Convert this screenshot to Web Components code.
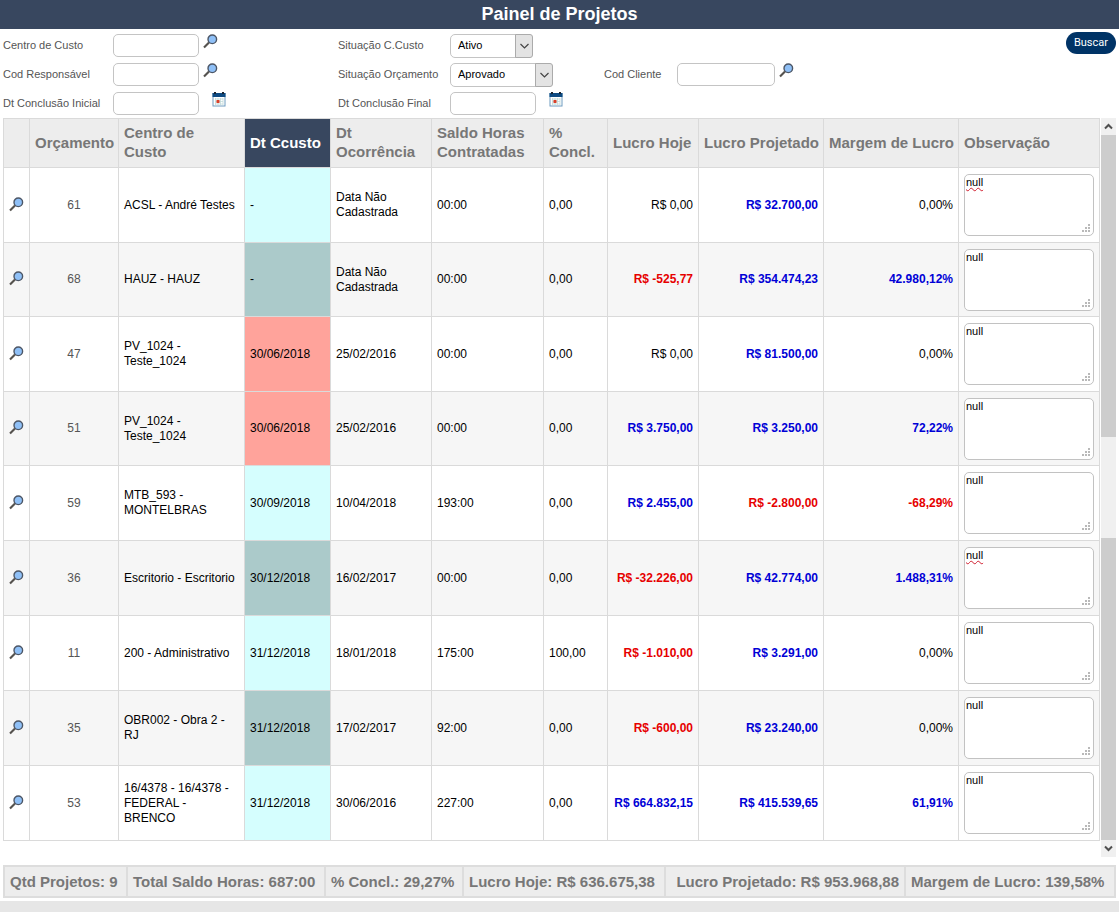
<!DOCTYPE html>
<html lang="pt-BR">
<head>
<meta charset="utf-8">
<title>Painel de Projetos</title>
<style>
  html { background: #e6e6e6; }
  body { margin: 0; font: 12px/15px "Liberation Sans", Arial, sans-serif; color: #000; }
</style>
</head>
<body>
<project-dashboard></project-dashboard>

<script>
const define = (name, html, setup) => {
  const template = document.createElement('template');
  template.innerHTML = html;
  customElements.define(name, class extends HTMLElement {
    connectedCallback() {
      if (this.shadowRoot) return;
      const root = this.attachShadow({ mode: 'open' });
      root.append(template.content.cloneNode(true));
      if (setup) setup(this, root);
    }
  });
};

define('lens-icon', `
  <style>
    :host { display: block; width: 15px; height: 15px; }
    svg { display: block; width: 100%; height: 100%; }
  </style>
  <svg viewBox="0 0 15 15" aria-hidden="true">
    <path d="M1 13.500 L6 8.500" stroke="#55524e" stroke-width="2.2" fill="none"/>
    <circle cx="9.300" cy="5.300" r="4.300" fill="#8fc0f7" stroke="#4c5666" stroke-width="1.400"/>
  </svg>`);

define('calendar-icon', `
  <style>
    :host { display: block; width: 14px; height: 15px; }
    svg { display: block; width: 100%; height: 100%; }
  </style>
  <svg viewBox="0 0 14 15" aria-hidden="true">
    <rect x="1" y="1.500" width="12" height="12.500" fill="#fff" stroke="#6f9cc0"/>
    <path d="M.5 1h13v4H.5z" fill="#0d4a82"/>
    <path d="M2 0h2v2H2zM10 0h2v2h-2z" fill="#1b2430"/>
    <path d="M3 7h8M3 9.500h8M3 12h8M3.500 6v7M6 6v7M8.500 6v7M11 6v7" stroke="#c3dbd9" stroke-width=".8"/>
    <path d="M4.500 8h3v3h-3z" fill="#d8402a"/>
  </svg>`);

define('filter-field', `
  <style>
    :host { display: flex; align-items: center; color: #555; font-size: 11px; }
    label { flex: none; width: var(--label, 110px); }
    input { box-sizing: border-box; width: var(--control, 86px); height: 23px; border: 1px solid #c4c4c4;
      border-radius: 5px; background: #fff; padding: 0 6px; font: inherit; }
    button { border: 0; padding: 0; background: none; margin: 0 0 8px 4px; cursor: pointer; }
    button.date { margin-left: 13px; }
  </style>
  <label for="control"><slot></slot></label>
  <input id="control" type="text">
  <button type="button"></button>`, (host, root) => {
  const button = root.querySelector('button');
  const date = host.hasAttribute('date');
  button.className = date ? 'date' : '';
  button.setAttribute('aria-label', date ? 'Abrir calendário' : 'Pesquisar');
  button.append(document.createElement(date ? 'calendar-icon' : 'lens-icon'));
});

define('filter-select', `
  <style>
    :host { display: flex; align-items: center; color: #555; font-size: 11px; }
    label { flex: none; width: var(--label, 110px); }
    .box { position: relative; width: var(--control); height: 24px; }
    select { appearance: none; box-sizing: border-box; width: 100%; height: 100%; border: 1px solid #c4c4c4;
      border-radius: 5px; background: #fff; color: #000; padding: 0 20px 0 7px; font: inherit; }
    .arrow { position: absolute; right: 0; top: 0; bottom: 0; box-sizing: border-box; width: 18px;
      border: 1px solid #ababab; border-radius: 0 3px 3px 0; background: #e3e3e3; pointer-events: none;
      display: grid; place-items: center; }
    svg { width: 9px; height: 6px; }
  </style>
  <label for="control"><slot></slot></label>
  <div class="box">
    <select id="control"></select>
    <span class="arrow"><svg viewBox="0 0 9 6"><path d="M.5 1l4 4 4-4" fill="none" stroke="#444" stroke-width="1.2"/></svg></span>
  </div>`, (host, root) => {
  root.querySelector('select').append(new Option(host.getAttribute('value')));
});

define('filter-bar', `
  <style>
    :host { display: grid; grid-template-columns: 335px 266px 1fr auto; grid-template-rows: repeat(3, 29px);
      padding: 2px 3px 0; }
    .first { grid-column: 1; }
    .second { --label: 112px; grid-column: 2; }
    .client { --label: 73px; --control: 98px; grid-column: 3; grid-row: 2; }
    .search { grid-column: 4; grid-row: 1; justify-self: end; align-self: start; height: 22px; margin-top: 1px;
      padding: 0 8px; border: 0; border-radius: 11px; background: #036; color: #fff; font: 11px/22px Roboto, sans-serif; }
  </style>
  <filter-field class="first">Centro de Custo</filter-field>
  <filter-select class="second" value="Ativo" style="--control: 83px">Situação C.Custo</filter-select>
  <button class="search" type="button">Buscar</button>
  <filter-field class="first">Cod Responsável</filter-field>
  <filter-select class="second" value="Aprovado" style="--control: 103px">Situação Orçamento</filter-select>
  <filter-field class="client">Cod Cliente</filter-field>
  <filter-field class="first" date>Dt Conclusão Inicial</filter-field>
  <filter-field class="second" date>Dt Conclusão Final</filter-field>`);

define('note-box', `
  <style>
    :host { display: block; position: relative; }
    textarea { display: block; box-sizing: border-box; width: 100%; height: 62px; border: 1px solid #c2c2c2;
      border-radius: 5px; padding: 1px; background: #fff; resize: none; overflow: hidden; color: #000;
      font: 11px/12px "Liberation Sans", Arial, sans-serif; }
    :host([misspelt]) textarea { text-decoration: underline wavy #d02030 1px; }
    svg { position: absolute; right: 3px; bottom: 3px; width: 9px; height: 9px; pointer-events: none; }
  </style>
  <textarea aria-label="Observação" spellcheck="false">null</textarea>
  <svg viewBox="0 0 9 9" aria-hidden="true"><path fill="#b9b9b9" d="M6 0h2v2H6zM3 3h2v2H3zM6 3h2v2H6zM0 6h2v2H0zM3 6h2v2H3zM6 6h2v2H6z"/></svg>`);

define('scroll-rail', `
  <style>
    :host { display: flex; flex-direction: column; width: 15px; background: #f0f0f0; }
    .end { flex: none; height: 17px; display: grid; place-items: center; }
    .thumb { flex: 3; background: #cdcdcd; }
    .gap { flex: 1; }
    svg { width: 9px; height: 7px; }
    path { fill: none; stroke: #505050; stroke-width: 2; }
  </style>
  <div class="end"><svg viewBox="0 0 9 7"><path d="M1 5.500l3.500-3.500 3.500 3.500"/></svg></div>
  <div class="thumb"></div><div class="gap"></div><div class="thumb"></div>
  <div class="end"><svg viewBox="0 0 9 7"><path d="M1 1.500l3.500 3.500 3.500-3.500"/></svg></div>`);

const projects = [
  ['61', 'ACSL - André Testes', '-', 'Data Não Cadastrada', '00:00', '0,00', 'R$ 0,00', 'R$ 32.700,00', '0,00%', 'misspelt'],
  ['68', 'HAUZ - HAUZ', '-', 'Data Não Cadastrada', '00:00', '0,00', 'R$ -525,77', 'R$ 354.474,23', '42.980,12%'],
  ['47', 'PV_1024 - Teste_1024', '30/06/2018', '25/02/2016', '00:00', '0,00', 'R$ 0,00', 'R$ 81.500,00', '0,00%', '', 'late'],
  ['51', 'PV_1024 - Teste_1024', '30/06/2018', '25/02/2016', '00:00', '0,00', 'R$ 3.750,00', 'R$ 3.250,00', '72,22%', '', 'late'],
  ['59', 'MTB_593 - MONTELBRAS', '30/09/2018', '10/04/2018', '193:00', '0,00', 'R$ 2.455,00', 'R$ -2.800,00', '-68,29%'],
  ['36', 'Escritorio - Escritorio', '30/12/2018', '16/02/2017', '00:00', '0,00', 'R$ -32.226,00', 'R$ 42.774,00', '1.488,31%', 'misspelt'],
  ['11', '200 - Administrativo', '31/12/2018', '18/01/2018', '175:00', '100,00', 'R$ -1.010,00', 'R$ 3.291,00', '0,00%'],
  ['35', 'OBR002 - Obra 2 - RJ', '31/12/2018', '17/02/2017', '92:00', '0,00', 'R$ -600,00', 'R$ 23.240,00', '0,00%'],
  ['53', '16/4378 - 16/4378 - FEDERAL - BRENCO', '31/12/2018', '30/06/2016', '227:00', '0,00', 'R$ 664.832,15', 'R$ 415.539,65', '61,91%']
];
const tone = text => /-/.test(text) ? 'neg' : /^(R\$ )?0,00%?$/.test(text) ? '' : 'pos';

define('project-table', `
  <style>
    :host { display: block; }
    table { width: 100%; table-layout: fixed; border-collapse: collapse; }
    th, td { border: 1px solid #dadada; padding: 0 5px; text-align: left; vertical-align: middle; }
    th { height: 46px; padding-bottom: 2px; background: #ededed; color: #777; font-size: 15px; line-height: 19px; }
    th.sorted { background: #38475f; color: #fff; }
    th.line { white-space: nowrap; }
    td { height: 74px; }
    .tight td { height: 73px; }
    tr:nth-child(even) td { background: #f6f6f6; }
    tbody .date { background: #d5fefe; }
    tbody tr:nth-child(even) .date { background: #abcaca; }
    tbody tr.late td.date { background: #ffa39b; }
    th.center, td.center { text-align: center; color: #555; }
    th.center { color: #777; }
    .num { text-align: right; }
    .pos { color: #0000d6; font-weight: bold; }
    .neg { color: #e60000; font-weight: bold; }
    button { display: block; border: 0; padding: 0; margin: 0 auto; background: none; cursor: pointer; }
    .open { padding: 0 0 2px; height: 72px; }
    .tight .open { height: 71px; }
  </style>
  <table>
    <colgroup>
      <col style="width:26px"><col style="width:89px"><col style="width:126px"><col style="width:86px">
      <col style="width:101px"><col style="width:112px"><col style="width:64px"><col style="width:91px">
      <col style="width:125px"><col style="width:135px"><col>
    </colgroup>
    <thead><tr>
      <th></th><th class="center">Orçamento</th><th>Centro de Custo</th><th class="sorted">Dt Ccusto</th>
      <th>Dt Ocorrência</th><th>Saldo Horas Contratadas</th><th>% Concl.</th><th class="line">Lucro Hoje</th>
      <th class="line">Lucro Projetado</th><th class="line">Margem de Lucro</th><th class="line">Observação</th>
    </tr></thead>
    <tbody></tbody>
  </table>`, (host, root) => {
  root.querySelector('tbody').innerHTML = projects.map((p, i) => `
    <tr class="${p[10] || ''} ${i === 1 || i === 3 ? 'tight' : ''}">
      <td class="open"><button type="button" aria-label="Abrir projeto"><lens-icon></lens-icon></button></td>
      <td class="center">${p[0]}</td><td>${p[1]}</td><td class="date">${p[2]}</td>
      <td>${p[3]}</td><td>${p[4]}</td><td>${p[5]}</td>
      ${[6, 7, 8].map(n => `<td class="num ${tone(p[n])}">${p[n]}</td>`).join('')}
      <td><note-box ${p[9] || ''}></note-box></td>
    </tr>`).join('');
});

define('totals-bar', `
  <style>
    :host { display: block; }
    ul { display: grid; grid-template-columns: 121fr 198fr 138fr 202fr 240fr 210fr; margin: 0; padding: 0;
      list-style: none; border: 2px solid #ddd; background: #ededed; color: #777; font-weight: bold;
      font-size: 15px; line-height: 29px; white-space: nowrap; }
    li { padding: 0 5px; }
    li + li { border-left: 2px solid #ddd; }
    .end { text-align: right; }
  </style>
  <ul>
    <li>Qtd Projetos: 9</li><li>Total Saldo Horas: 687:00</li><li>% Concl.: 29,27%</li>
    <li>Lucro Hoje: R$ 636.675,38</li><li class="end">Lucro Projetado: R$ 953.968,88</li><li>Margem de Lucro: 139,58%</li>
  </ul>`);

define('project-dashboard', `
  <style>
    :host { display: block; background: #fff; padding-bottom: 3px; }
    h1 { margin: 0; background: #38475f; color: #fff; text-align: center; font-size: 18px; line-height: 29px; }
    .list { display: grid; grid-template-columns: 1fr 15px; gap: 1px; margin: 0 3px; }
    project-table { padding-bottom: 16px; }
    totals-bar { margin: 8px 3px 0; }
  </style>
  <h1>Painel de Projetos</h1>
  <filter-bar></filter-bar>
  <div class="list"><project-table></project-table><scroll-rail></scroll-rail></div>
  <totals-bar></totals-bar>`);
</script>
</body>
</html>
